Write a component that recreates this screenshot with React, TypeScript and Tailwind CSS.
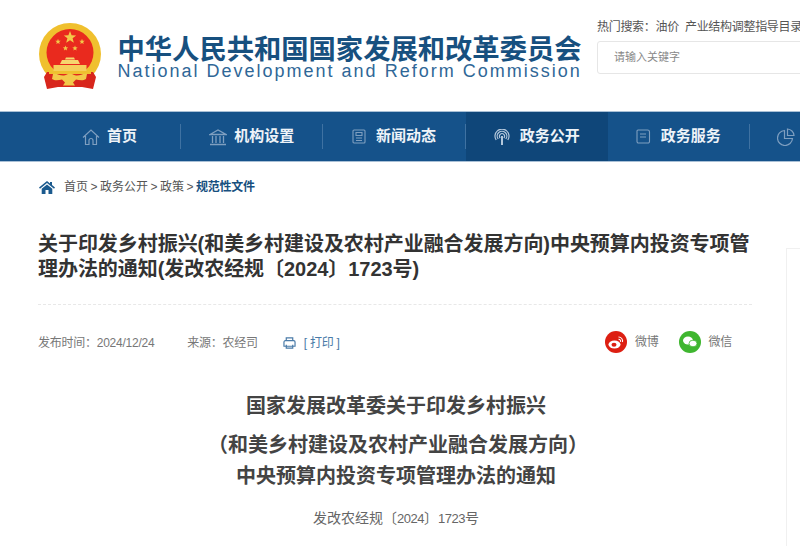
import React from 'react';

const CJK = { fontFamily: '"Liberation Sans", "Noto Sans CJK SC", sans-serif' };

const Star = ({ cx, cy, r }: { cx: number; cy: number; r: number }) => {
  const pts: string[] = [];
  for (let i = 0; i < 10; i++) {
    const rad = i % 2 === 0 ? r : r * 0.42;
    const a = (Math.PI / 5) * i - Math.PI / 2;
    pts.push(`${cx + rad * Math.cos(a)},${cy + rad * Math.sin(a)}`);
  }
  return <polygon points={pts.join(' ')} fill="#f3c94a" />;
};

// national emblem, simplified
const Emblem = () => (
  <svg width="64" height="68" viewBox="0 0 64 68" className="shrink-0">
    <circle cx="32" cy="31" r="31" fill="#f0c02e" />
    <path d="M9 49h46l3 5-3 12-11-2H20L9 66 6 54z" fill="#d8261c" />
    <circle cx="32" cy="29.500" r="23.500" fill="#e92a1e" />
    <Star cx={32} cy={14.500} r={6.500} />
    <Star cx={20} cy={18.700} r={2.900} />
    <Star cx={44} cy={18.700} r={2.900} />
    <Star cx={27.500} cy={25.300} r={2.800} />
    <Star cx={37} cy={25.300} r={2.800} />
    <path d="M28 34.500h8l1 2h-10z" fill="#f6d66e" />
    <path d="M24 37h16l2 4H22z" fill="#f6d66e" />
    <rect x="15.500" y="42" width="33" height="6" fill="#f5cf5c" />
    <path d="M11 48h42v3H11z" fill="#efc030" />
    <path d="M15 51c4-1 7 2 11 1.500 3-.5 4-2 6-2s3 1.500 6 2c4 .5 7-2.500 11-1.500l-1 5c-3 2-7 1-10 .5l-3 3 2 3H25l2-3-3-3c-3 .5-7 1.500-10-.5z" fill="#f3c94a" />
  </svg>
);

const IconHouse = () => (
  <svg width="18" height="18" viewBox="0 0 18 18" fill="none" stroke="#7f9fc0" strokeWidth="1.2">
    <path d="M1 9.500 9 2l8 7.500M3.500 8v8.500h3.500v-4a2 2 0 0 1 4 0v4h3.500V8" />
  </svg>
);
const IconBank = () => (
  <svg width="18" height="18" viewBox="0 0 18 18" fill="none" stroke="#7f9fc0" strokeWidth="1.3">
    <path d="M1 6.500 9 2l8 4.500zM3.500 8v7M7 8v7M11 8v7M14.500 8v7M1 16.500h16" />
  </svg>
);
const IconNews = () => (
  <svg width="14" height="15" viewBox="0 0 14 15" fill="none" stroke="#7f9fc0" strokeWidth="1.1">
    <rect x="1" y="1" width="12" height="13" rx="1" />
    <path d="M4 3.500h6v3H4zM4 9h6M4 11.500h6" />
  </svg>
);
const IconSignal = () => (
  <svg width="16" height="16" viewBox="0 0 16 16" fill="none" stroke="#b3c7db" strokeWidth="1.200">
    <path d="M2.200 11a7 7 0 1 1 11.600 0M4.200 10a4.800 4.800 0 1 1 7.600 0M6.200 9a2.600 2.600 0 1 1 3.600 0" />
    <path d="M8 7v9" strokeWidth="2" />
  </svg>
);
const IconDoc = () => (
  <svg width="15" height="15" viewBox="0 0 15 15" fill="none" stroke="#7f9fc0" strokeWidth="1.100">
    <path d="M2 1h9.500A2 2 0 0 1 13.500 3v9.500a1.500 1.500 0 0 1-1.500 1.500H2.500A1.500 1.500 0 0 1 1 12.500V2a1 1 0 0 1 1-1zM4 5h6M4 8h6" />
  </svg>
);
const IconPie = () => (
  <svg width="18" height="18" viewBox="0 0 18 18" fill="none" stroke="#7f9fc0" strokeWidth="1.200">
    <path d="M7.500 2.500a7.500 7.500 0 1 0 8 8h-8zM10.500 1v6.500H17A7 7 0 0 0 10.500 1z" />
  </svg>
);
const IconPrint = () => (
  <svg width="13" height="12" viewBox="0 0 14 13" fill="none" stroke="#4a7ba8" strokeWidth="1.300">
    <path d="M3.500 4V1h7v3M1 10V5.500A1.500 1.500 0 0 1 2.500 4h9A1.500 1.500 0 0 1 13 5.500V10zM3.500 8.500V12h7V8.500" />
  </svg>
);
const IconCrumbHome = () => (
  <svg width="16" height="13" viewBox="0 0 16 13" className="shrink-0">
    <path d="M8 0 0 6.500l1 1.200L8 2l7 5.700 1-1.200-3-2.400V1h-2v1.500z" fill="#1b5a8e" />
    <path d="M2.700 7.800 8 3.500l5.300 4.300V13H9.500V9h-3v4H2.700z" fill="#1b5a8e" />
  </svg>
);

const Weibo = () => (
  <svg width="22" height="22" viewBox="0 0 22 22" className="shrink-0">
    <circle cx="11" cy="11" r="11" fill="#dd1f12" />
    <ellipse cx="9.500" cy="13.500" rx="6" ry="4" fill="#fff" />
    <ellipse cx="9" cy="13.700" rx="2.500" ry="2" fill="#dd1f12" />
    <path d="M13.500 6a4 4 0 0 1 4 5M13.500 8.200a2 2 0 0 1 2 2.600" fill="none" stroke="#fff" strokeWidth="1.100" />
  </svg>
);
const Wechat = () => (
  <svg width="22" height="22" viewBox="0 0 22 22" className="shrink-0">
    <circle cx="11" cy="11" r="11" fill="#3fb62f" />
    <ellipse cx="9" cy="9.500" rx="5" ry="4" fill="#fff" />
    <ellipse cx="14" cy="12.500" rx="4" ry="3.300" fill="#fff" stroke="#3fb62f" strokeWidth="0.800" />
  </svg>
);

const navItems = [
  { label: '首页', icon: <IconHouse />, gap: 'gap-[7px]' },
  { label: '机构设置', icon: <IconBank />, gap: 'gap-[7px]' },
  { label: '新闻动态', icon: <IconNews />, gap: 'gap-[10px]' },
  { label: '政务公开', icon: <IconSignal />, gap: 'gap-[10px]', active: true },
  { label: '政务服务', icon: <IconDoc />, gap: 'gap-[10px]' },
];

const crumbs = ['首页', '政务公开', '政策'];

export default function App() {
  return (
    <div className="w-[800px] h-[546px] overflow-hidden bg-white" style={CJK}>
      {/* Header */}
      <div className="flex h-[111px] pl-[38px]">
        <div className="mt-[23px]">
          <Emblem />
        </div>
        <div className="ml-[15.500px] mt-[37px] w-[470px] shrink-0">
          <div className="text-[27.300px] leading-[26px] font-bold text-[#17507f] whitespace-nowrap">中华人民共和国国家发展和改革委员会</div>
          <div className="text-[18px] leading-[16px] tracking-[2px] text-[#2f6797] whitespace-nowrap">National Development and Reform Commission</div>
        </div>
        <div className="ml-[9.500px] mt-[18px] w-[260px] shrink-0">
          <div className="text-[12px] leading-[18px] tracking-[-0.3px] text-[#555] whitespace-nowrap">热门搜索：油价&nbsp; 产业结构调整指导目录</div>
          <div className="mt-[5px] h-[33px] w-[240px] rounded-[3px] border border-[#e6e6e6] pl-[16px] text-[11px] leading-[31px] text-[#888]">请输入关键字</div>
        </div>
      </div>

      {/* Nav */}
      <div className="flex h-[51px] pl-[39px] border-t border-b border-[#a9c0d6] bg-[#15528a] overflow-hidden">
        {navItems.map((item) => (
          <div
            key={item.label}
            className={`flex h-full w-[142.200px] shrink-0 items-center ${item.active ? 'bg-[#0f4679]' : ''}`}
          >
            <div className={`flex flex-1 items-center justify-center ${item.gap}`}>
              {item.icon}
              <span className="text-[15px] font-bold text-[#eef3f8]">{item.label}</span>
            </div>
            {!item.active && <div className="h-[25px] w-px bg-[#3f72a2]" />}
          </div>
        ))}
        <div className="ml-[27px] flex items-center">
          <IconPie />
        </div>
      </div>

      {/* Breadcrumb */}
      <div className="flex items-center gap-[2.500px] pl-[39px] pt-[17px] text-[12px] leading-[16px] text-[#555]">
        <span className="mr-[6.500px]"><IconCrumbHome /></span>
        {crumbs.map((c) => (
          <React.Fragment key={c}>
            <span>{c}</span>
            <span>&gt;</span>
          </React.Fragment>
        ))}
        <span className="font-bold text-[#17507f] tracking-[-0.3px]">规范性文件</span>
      </div>

      <div className="flex">
        <div className="ml-[38px] w-[714px] shrink-0">
          <h1 className="mt-[37px] text-[20px] leading-[25px] tracking-[-0.05px] font-bold text-[#333]">
            关于印发乡村振兴(和美乡村建设及农村产业融合发展方向)中央预算内投资专项管理办法的通知(发改农经规〔2024〕1723号)
          </h1>
          <div className="mt-[22px] border-t border-dashed border-[#e8e8e8]" />

          <div className="mt-[26px] flex items-center h-[24px] text-[12px] tracking-[-0.25px] text-[#777]">
            <span>发布时间：2024/12/24</span>
            <span className="ml-[33px]">来源：农经司</span>
            <span className="ml-[25px]"><IconPrint /></span>
            <span className="ml-[8px] text-[#4a7ba8]">[ 打印 ]</span>
            <div className="ml-auto mr-[20px] mb-[3px] flex items-center">
              <Weibo />
              <span className="ml-[8px]">微博</span>
              <span className="ml-[21px]"><Wechat /></span>
              <span className="ml-[7px]">微信</span>
            </div>
          </div>

          <div className="mt-[37px] pl-[2px] text-center text-[20px] font-bold text-[#444]">
            <p className="leading-[28px]">国家发展改革委关于印发乡村振兴</p>
            <p className="mt-[11px] pl-[4px] leading-[28px]">（和美乡村建设及农村产业融合发展方向）</p>
            <p className="mt-[3px] leading-[28px]">中央预算内投资专项管理办法的通知</p>
          </div>
          <p className="mt-[16px] pl-[2px] text-center text-[14px] leading-[24px] text-[#666]">
            发改农经规〔<span className="text-[13px] tracking-[-0.5px]">2024</span>〕<span className="text-[13px] tracking-[-0.5px]">1723</span>号
          </p>
        </div>
        <div className="ml-[34px] mt-[53px] h-[400px] w-[40px] shrink-0 border-l border-t border-[#f0f0f0]" />
      </div>
    </div>
  );
}
